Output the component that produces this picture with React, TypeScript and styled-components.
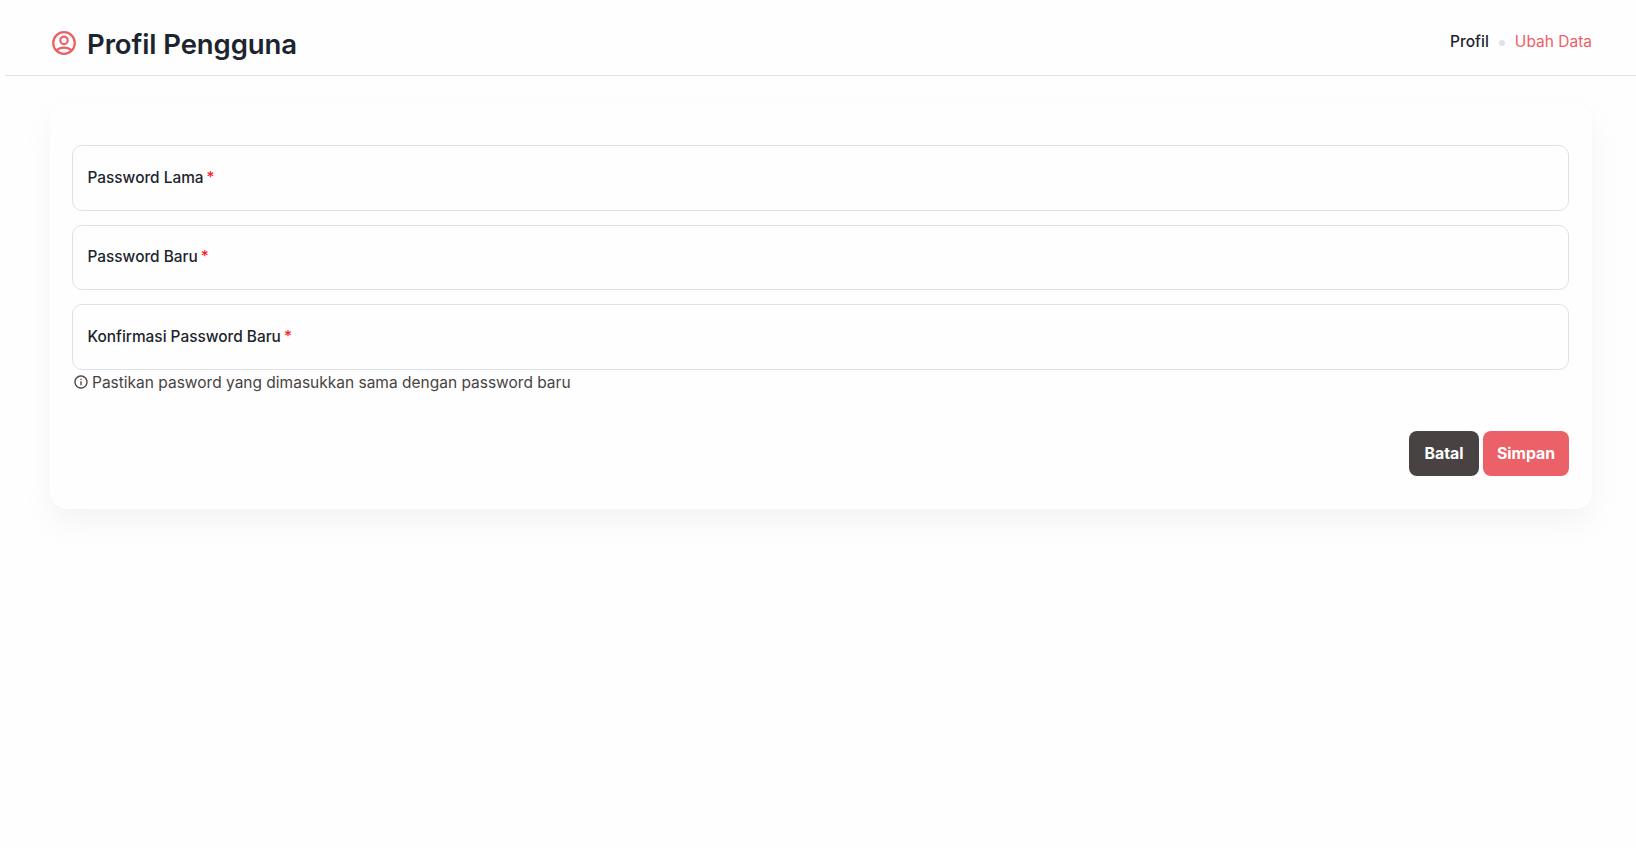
import React from 'react';
import styled, { createGlobalStyle } from 'styled-components';
import { RiInformationLine } from 'react-icons/ri';

const GlobalStyle = createGlobalStyle`
  *, *::before, *::after { box-sizing: border-box; }
  body {
    margin: 0;
    min-height: 100vh;
    background: #fefefe;
    color: #1c252e;
    font-family: Inter, "Liberation Sans", sans-serif;
    font-size: 15.5px;
    line-height: 24px;
  }
`;

const Page = styled.div`
  min-height: 100vh;
`;

const Header = styled.header`
  display: flex;
  justify-content: space-between;
  align-items: center;
  height: 76px;
  margin-left: 5px;
  padding: 13px 44px 0 47px;
  border-bottom: 1px solid #dfe1e5;
`;

const Title = styled.h1`
  display: flex;
  align-items: center;
  gap: 11px;
  margin: 0;
  font-size: 27.5px;
  line-height: 36px;
  font-weight: 600;
  letter-spacing: -0.1px;
`;

const UserIcon = styled.svg`
  width: 24px;
  height: 24px;
  margin-top: -3px;
  fill: none;
  stroke: #ec6067;
  stroke-width: 2.2;
`;

const Breadcrumb = styled.nav`
  display: flex;
  align-items: center;
  margin-top: -4px;
`;

const Crumb = styled.span<{ $active?: boolean }>`
  color: ${(p) => (p.$active ? '#ec6067' : '#1c252e')};
  font-weight: ${(p) => (p.$active ? 400 : 500)};
`;

const Dot = styled.span`
  width: 6px;
  height: 6px;
  margin: 1px 10px 0;
  border-radius: 50%;
  background: #dde1e6;
`;

const Card = styled.form`
  display: flex;
  flex-direction: column;
  height: 406.5px;
  margin: 26.5px 44px 0 50px;
  padding: 42.5px 23px 0 22px;
  border-radius: 16px;
  background: #fefefe;
  box-shadow: 0 0 2px rgba(145, 158, 171, 0.06), 0 14px 28px -2px rgba(145, 158, 171, 0.11);
`;

const Fields = styled.div`
  display: grid;
  grid-auto-rows: 65.5px;
  gap: 14px;
`;

const Field = styled.label`
  display: flex;
  align-items: flex-start;
  padding: 19.9px 14.5px;
  border: 1px solid #dfe1e6;
  border-radius: 10px;
  font-size: 15.4px;
  font-weight: 500;
`;

const Required = styled.span`
  margin-left: 3px;
  color: #ff1e1e;
`;

const Hint = styled.p`
  display: flex;
  align-items: center;
  gap: 3px;
  margin: 1.5px 0 0;
  padding-left: 1px;
  color: #484342;

  svg {
    width: 16px;
    height: 16px;
    margin-top: -2px;
  }
`;

const Actions = styled.div`
  display: flex;
  justify-content: flex-end;
  gap: 4px;
  margin-top: 36px;
`;

const Button = styled.button<{ $primary?: boolean }>`
  width: ${(p) => (p.$primary ? 86 : 70)}px;
  height: 45px;
  padding: 1px 0 0;
  border: 0;
  border-radius: 8px;
  background: ${(p) => (p.$primary ? '#ec6067' : '#484342')};
  color: #fff;
  font: 700 15.8px/24px Inter, "Liberation Sans", sans-serif;
`;

const labels = ['Password Lama', 'Password Baru', 'Konfirmasi Password Baru'];

export default function App() {
  return (
    <Page>
      <GlobalStyle />
      <Header>
        <Title>
          <UserIcon viewBox="0 0 24 24" aria-hidden="true">
            <circle cx="12" cy="12" r="10.8" />
            <circle cx="12" cy="9.4" r="3.7" />
            <path d="M4.6 19.4C6.4 17.6 9 16.7 12 16.7s5.6.9 7.4 2.7" />
          </UserIcon>
          <span>Profil Pengguna</span>
        </Title>
        <Breadcrumb>
          <Crumb>Profil</Crumb>
          <Dot />
          <Crumb $active>Ubah Data</Crumb>
        </Breadcrumb>
      </Header>
      <main>
        <Card>
          <Fields>
            {labels.map((label) => (
              <Field key={label}>{label}<Required>*</Required></Field>
            ))}
          </Fields>
          <Hint><RiInformationLine /><span>Pastikan pasword yang dimasukkan sama dengan password baru</span></Hint>
          <Actions>
            <Button type="button">Batal</Button>
            <Button type="button" $primary>Simpan</Button>
          </Actions>
        </Card>
      </main>
    </Page>
  );
}
